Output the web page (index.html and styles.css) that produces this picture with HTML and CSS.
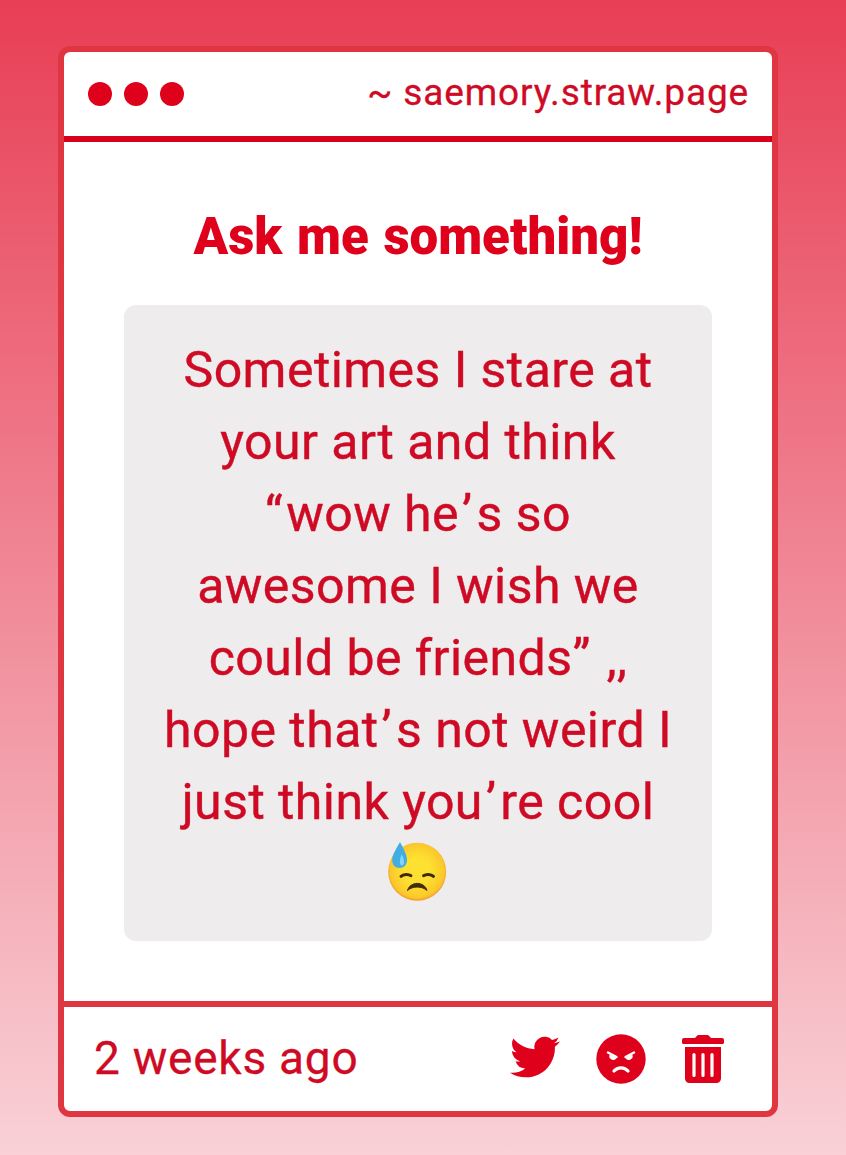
FILE: index.html
```html
<!DOCTYPE html>
<html lang="en">
<head>
    <meta charset="UTF-8">
    <meta name="viewport" content="width=device-width, initial-scale=1.0">
    <title>saemory.straw.page</title>
    <link rel="stylesheet" href="styles.css">
</head>
<body>
    <div class="card">
        <div class="card-header">
            <div class="dots">
                <span class="dot"></span>
                <span class="dot"></span>
                <span class="dot"></span>
            </div>
            <span class="site">~ saemory.straw.page</span>
        </div>

        <div class="card-body">
            <h1>Ask me something!</h1>
            <div class="message">
                <p>Sometimes I stare at<br>your art and think<br><span class="quote">“</span>wow he<span class="apos">’</span>s so<br>awesome I wish we<br>could be friends<span class="quote">”</span> ,,<br>hope that<span class="apos">’</span>s not weird I<br>just think you<span class="apos">’</span>re cool</p>
                <svg class="emoji" viewBox="0 0 60 60" role="img" aria-label="Downcast face with sweat">
                    <defs>
                        <radialGradient id="face" cx="0.5" cy="0.48" r="0.52">
                            <stop offset="0.45" stop-color="#fde030"/>
                            <stop offset="0.9" stop-color="#fbc72b"/>
                            <stop offset="1" stop-color="#f0982b"/>
                        </radialGradient>
                    </defs>
                    <circle cx="29.200" cy="29.800" r="29" fill="url(#face)"/>
                    <path d="M13 34.300c2.500-2.400 7.500-2.400 10-.6M35.500 33.700c2.500-1.800 7.500-1.800 10 .6" fill="none" stroke="#422b0d" stroke-width="3" stroke-linecap="round"/>
                    <path d="M19.500 48.500c2.500-9.500 17-9.500 19.500 0-5-4.600-14.500-4.600-19.500 0z" fill="#422b0d" stroke="#422b0d" stroke-linejoin="round"/>
                    <path d="M12 0c2.500 5 7 12 7 18 0 5-3.300 8-7.500 8s-7.300-3-7.300-8C4.200 12 9.500 5 12 0z" fill="#42ade2"/>
                    <path d="M13.500 12.500c3 4 3.500 11 .5 11s-2.500-6-.5-11z" fill="#81d4fa"/>
                </svg>
            </div>
        </div>

        <div class="card-footer">
            <span class="time">2 weeks ago</span>
            <div class="actions">
                <svg class="icon-twitter" viewBox="0 0 24 24"><path d="M23.953 4.570a10 10 0 01-2.825.775 4.958 4.958 0 002.163-2.723c-.951.555-2.005.959-3.127 1.184a4.920 4.920 0 00-8.384 4.482C7.690 8.095 4.067 6.130 1.640 3.162a4.822 4.822 0 00-.666 2.475c0 1.710.870 3.213 2.188 4.096a4.904 4.904 0 01-2.228-.616v.060a4.923 4.923 0 003.946 4.827 4.996 4.996 0 01-2.212.085 4.936 4.936 0 004.604 3.417 9.867 9.867 0 01-6.102 2.105c-.39 0-.779-.023-1.170-.067a13.995 13.995 0 007.557 2.209c9.053 0 13.998-7.496 13.998-13.985 0-.21 0-.42-.015-.63A9.935 9.935 0 0024 4.590z"/></svg>
                <svg class="icon-angry" viewBox="0 0 50 50">
                    <circle cx="25" cy="25" r="24.700"/>
                    <g fill="none" stroke="#fff" stroke-width="2.400" stroke-linecap="round">
                        <path d="M12 18.500l8.500 4.500M38 18.500L29.500 23"/>
                        <path d="M18 37c3.500-4.300 10.500-4.300 14 0" stroke-width="3.200"/>
                    </g>
                    <path d="M13.800 20.500l6.800 3.300a3.400 3.400 0 11-6.800-3.300zM36.200 20.500l-6.800 3.300a3.400 3.400 0 106.800-3.300z" fill="#fff"/>
                </svg>
                <svg class="icon-trash" viewBox="0 0 42 48">
                    <path d="M2 3h11l2-2.200a2 2 0 011.500-.8h9a2 2 0 011.500.8L29 3h11a2 2 0 012 2v2.500a1.500 1.500 0 01-1.500 1.500h-39A1.500 1.500 0 010 7.500V5a2 2 0 012-2zM3 12h36v31.500a4.500 4.500 0 01-4.500 4.500h-27A4.500 4.500 0 013 43.500z"/>
                    <path d="M12 19.500v21M21 19.500v21M30 19.500v21" fill="none" stroke="#fff" stroke-width="3.200" stroke-linecap="round"/>
                </svg>
            </div>
        </div>
    </div>
</body>
</html>
```
FILE: styles.css
```css
* { box-sizing: border-box; }
html { height: 100%; }
body { min-height: 100%; margin: 0; padding: 46px 68px 38px 58px; font-family: Roboto, "Liberation Sans", sans-serif; color: #cf0a24; background: linear-gradient(#e83e55, #f9d1d7); }
.card { display: flex; flex-direction: column; width: 720px; height: 1071px; background-color: #fff; border: 6px solid #e03641; border-radius: 12px; }
.card-header { display: flex; justify-content: space-between; align-items: center; height: 90px; padding: 0 23px 0 24px; border-bottom: 6px solid #d6001c; }
.dots { display: flex; gap: 12px; }
.dot { width: 24px; height: 24px; border-radius: 50%; background-color: #df001b; }
.site { padding-bottom: 4px; font-size: 37px; letter-spacing: 0.85px; white-space: nowrap; -webkit-text-stroke: 0.3px; }
.card-body { flex: 1; padding: 59px 60px 0; text-align: center; }
h1 { margin: 0 0 32px; font-size: 51px; line-height: 72px; font-weight: 900; color: #df001b; word-spacing: 2px; white-space: nowrap; }
.message { height: 636px; padding: 29px 0 0; background-color: #eeecec; border-radius: 12px; }
.message p { margin: 0; font-size: 50px; line-height: 72px; letter-spacing: 0.45px; white-space: nowrap; -webkit-text-stroke: 0.4px; }
.quote { margin-right: 3px; }
.apos { margin: 0 4px 0 3px; }
.emoji { display: block; width: 60px; height: 60px; margin: 4px auto 0; }
.card-footer { display: flex; justify-content: space-between; align-items: center; height: 110px; padding: 0 48px 0 30px; border-top: 6px solid #de3640; }
.time { padding-bottom: 2px; font-size: 46px; letter-spacing: 0.75px; white-space: nowrap; -webkit-text-stroke: 0.3px; }
.actions { display: flex; align-items: center; fill: #df001b; }
.icon-twitter { width: 50px; height: 50px; margin: 0 36px 4px 0; }
.icon-angry { width: 50px; height: 50px; margin-right: 36px; }
.icon-trash { width: 42px; height: 48px; }
```
